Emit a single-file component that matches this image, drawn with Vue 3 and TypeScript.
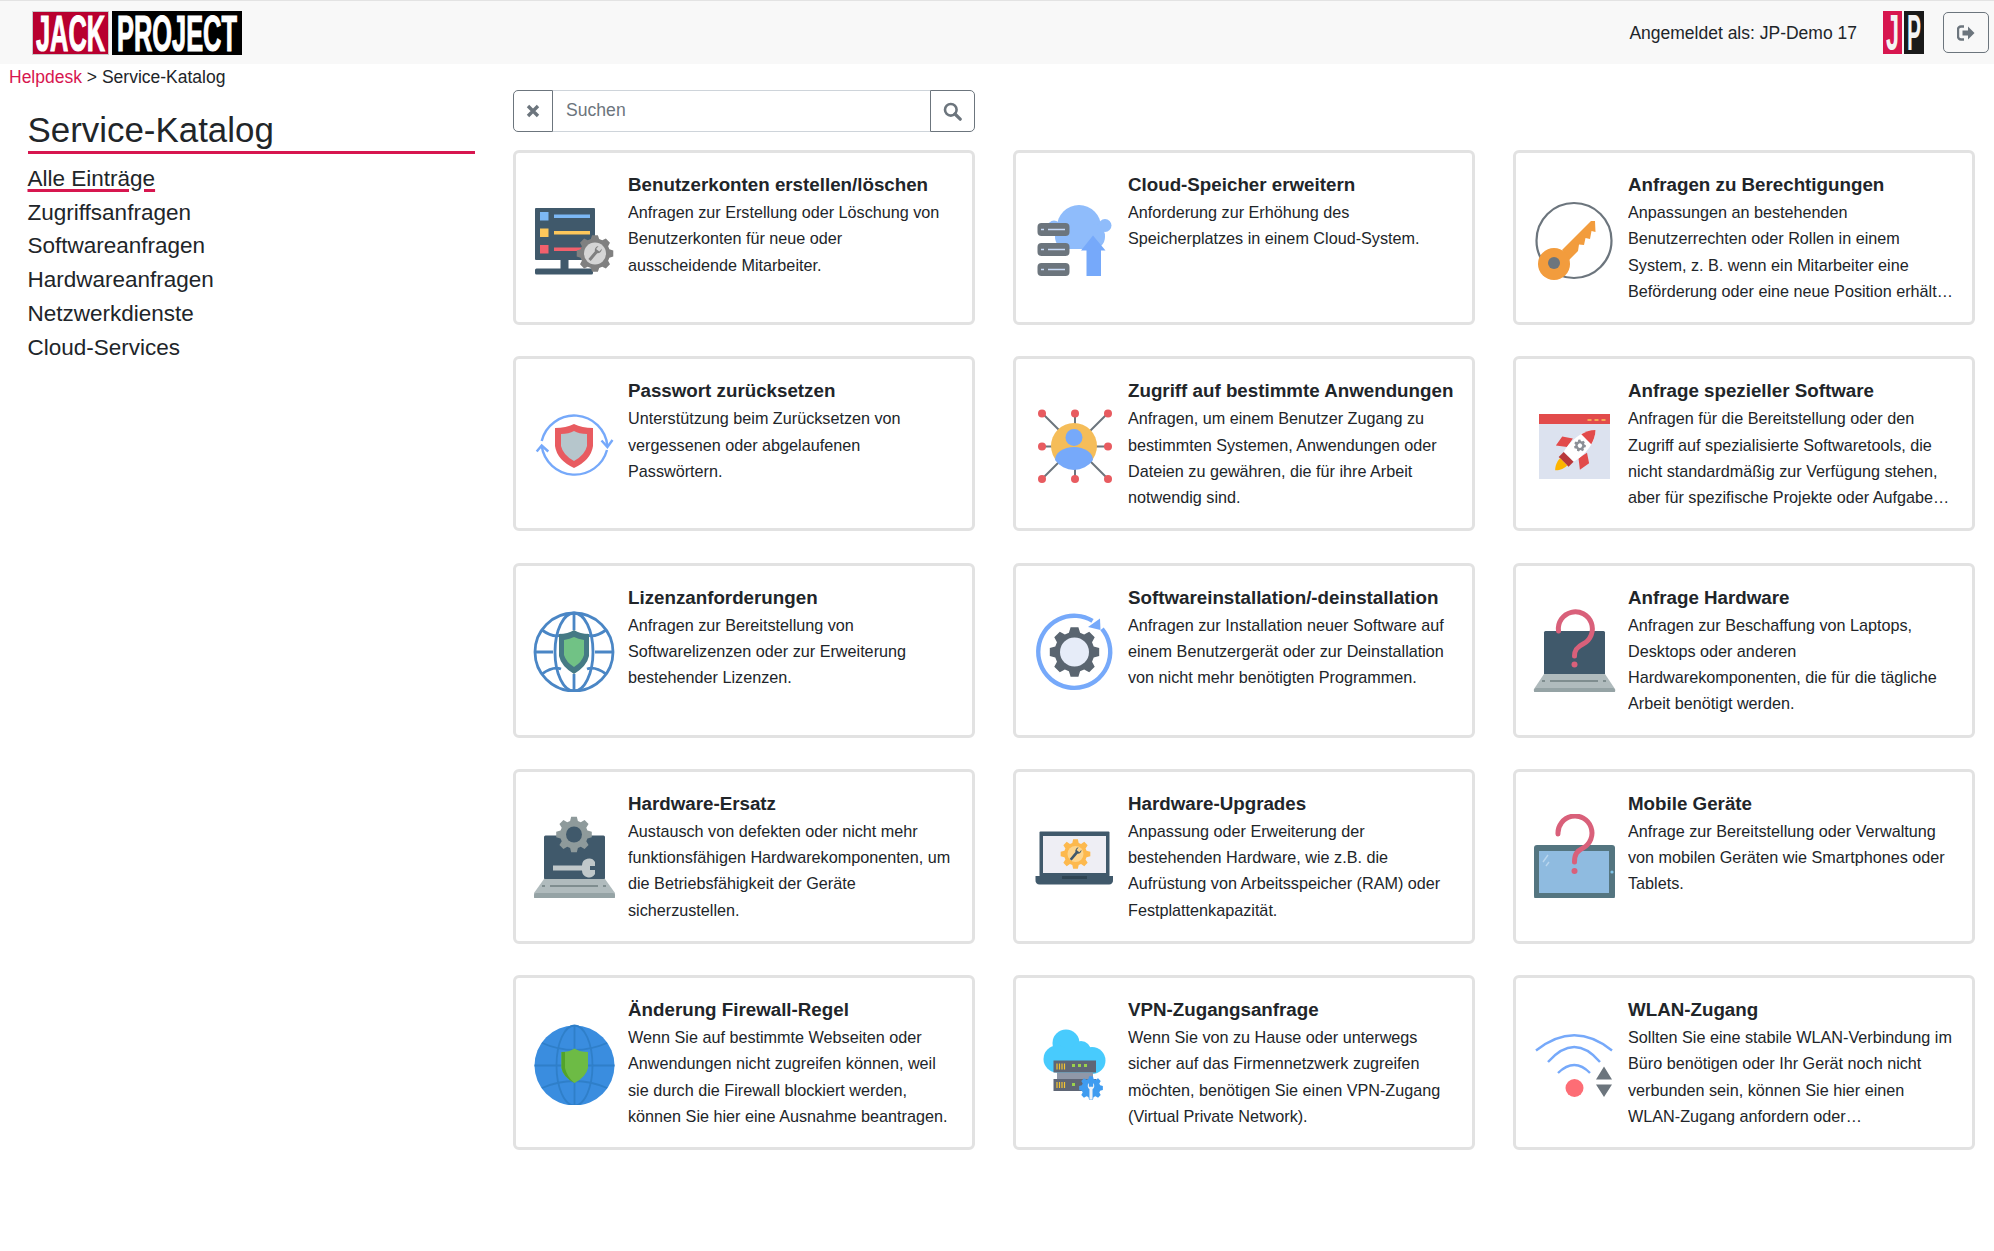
<script setup lang="ts">
interface Entry { icon: string; title: string; desc: string }

const menu: string[] = ['Alle Einträge', 'Zugriffsanfragen', 'Softwareanfragen', 'Hardwareanfragen', 'Netzwerkdienste', 'Cloud-Services']

const entries: Entry[] = [
  { icon: 'accounts', title: 'Benutzerkonten erstellen/löschen', desc: 'Anfragen zur Erstellung oder Löschung von Benutzerkonten für neue oder ausscheidende Mitarbeiter.' },
  { icon: 'cloud', title: 'Cloud-Speicher erweitern', desc: 'Anforderung zur Erhöhung des Speicherplatzes in einem Cloud-System.' },
  { icon: 'key', title: 'Anfragen zu Berechtigungen', desc: 'Anpassungen an bestehenden Benutzerrechten oder Rollen in einem System, z. B. wenn ein Mitarbeiter eine Beförderung oder eine neue Position erhält und zusätzliche Rechte benötigt.' },
  { icon: 'password', title: 'Passwort zurücksetzen', desc: 'Unterstützung beim Zurücksetzen von vergessenen oder abgelaufenen Passwörtern.' },
  { icon: 'network', title: 'Zugriff auf bestimmte Anwendungen', desc: 'Anfragen, um einem Benutzer Zugang zu bestimmten Systemen, Anwendungen oder Dateien zu gewähren, die für ihre Arbeit notwendig sind.' },
  { icon: 'rocket', title: 'Anfrage spezieller Software', desc: 'Anfragen für die Bereitstellung oder den Zugriff auf spezialisierte Softwaretools, die nicht standardmäßig zur Verfügung stehen, aber für spezifische Projekte oder Aufgaben benötigt werden.' },
  { icon: 'license', title: 'Lizenzanforderungen', desc: 'Anfragen zur Bereitstellung von Softwarelizenzen oder zur Erweiterung bestehender Lizenzen.' },
  { icon: 'install', title: 'Softwareinstallation/-deinstallation', desc: 'Anfragen zur Installation neuer Software auf einem Benutzergerät oder zur Deinstallation von nicht mehr benötigten Programmen.' },
  { icon: 'hardware', title: 'Anfrage Hardware', desc: 'Anfragen zur Beschaffung von Laptops, Desktops oder anderen Hardwarekomponenten, die für die tägliche Arbeit benötigt werden.' },
  { icon: 'replace', title: 'Hardware-Ersatz', desc: 'Austausch von defekten oder nicht mehr funktionsfähigen Hardwarekomponenten, um die Betriebsfähigkeit der Geräte sicherzustellen.' },
  { icon: 'upgrade', title: 'Hardware-Upgrades', desc: 'Anpassung oder Erweiterung der bestehenden Hardware, wie z.B. die Aufrüstung von Arbeitsspeicher (RAM) oder Festplattenkapazität.' },
  { icon: 'mobile', title: 'Mobile Geräte', desc: 'Anfrage zur Bereitstellung oder Verwaltung von mobilen Geräten wie Smartphones oder Tablets.' },
  { icon: 'firewall', title: 'Änderung Firewall-Regel', desc: 'Wenn Sie auf bestimmte Webseiten oder Anwendungen nicht zugreifen können, weil sie durch die Firewall blockiert werden, können Sie hier eine Ausnahme beantragen.' },
  { icon: 'vpn', title: 'VPN-Zugangsanfrage', desc: 'Wenn Sie von zu Hause oder unterwegs sicher auf das Firmennetzwerk zugreifen möchten, benötigen Sie einen VPN-Zugang (Virtual Private Network).' },
  { icon: 'wifi', title: 'WLAN-Zugang', desc: 'Sollten Sie eine stabile WLAN-Verbindung im Büro benötigen oder Ihr Gerät noch nicht verbunden sein, können Sie hier einen WLAN-Zugang anfordern oder Zugangsinformationen erneuern lassen.' },
]

function gear(cx: number, cy: number, ro: number, ri: number, n: number): string {
  const step = (Math.PI * 2) / n
  const pts: string[] = []
  for (let i = 0; i < n; i++) {
    const a = i * step - Math.PI / 2
    const add = (r: number, o: number) => pts.push(`${(cx + r * Math.cos(a + o * step)).toFixed(2)},${(cy + r * Math.sin(a + o * step)).toFixed(2)}`)
    add(ri, -0.36)
    add(ro, -0.2)
    add(ro, 0.2)
    add(ri, 0.36)
  }
  return pts.join(' ')
}

const wrench = 'M-1.8 10 V-2 A5 5 0 0 1 -2.5 -9.5 V-5 H2.5 V-9.5 A5 5 0 0 1 1.8 -2 V10 Z'
</script>

<template>
  <div class="page">
    <header class="top">
      <svg class="logo" width="210" height="44" viewBox="0 0 210 44">
        <rect x="0.5" y="0.5" width="76" height="43" fill="#b8002f" stroke="#c9c9c9" />
        <rect x="80" y="0" width="130" height="44" fill="#000" />
        <text class="logotext" transform="translate(4 40) scale(.507 1)">JACK</text>
        <text class="logotext" transform="translate(85 40) scale(.508 1)">PROJECT</text>
      </svg>
      <div class="user">
        <span class="who">Angemeldet als: JP-Demo 17</span>
        <svg class="jp" width="41" height="43" viewBox="0 0 41 43">
          <rect x="0" y="0" width="19" height="43" fill="#d7164f" />
          <rect x="21" y="0" width="20" height="43" fill="#1a1a1a" />
          <text class="jptext" transform="translate(3 39) scale(.47 1)">J</text>
          <text class="jptext" transform="translate(24 39) scale(.42 1)">P</text>
        </svg>
        <button class="logout" type="button" aria-label="Abmelden">
          <svg width="18" height="16" viewBox="0 0 18 16">
            <path d="M7 1.5H4A3 3 0 0 0 1 4.5V11.5A3 3 0 0 0 4 14.5H7" fill="none" stroke="#6c757d" stroke-width="2.4" />
            <path d="M11 1.5 L17.5 8 L11 14.5 V10.6 H5.5 V5.4 H11 Z" fill="#6c757d" />
          </svg>
        </button>
      </div>
    </header>

    <nav class="crumb"><a class="crumblink">Helpdesk</a> &gt; Service-Katalog</nav>

    <main class="main">
      <aside class="side">
        <h1 class="heading">Service-Katalog</h1>
        <ul class="menu">
          <li v-for="(m, i) in menu" :key="m" :class="{ active: i === 0 }"><span>{{ m }}</span></li>
        </ul>
      </aside>

      <section class="content">
        <div class="search">
          <button class="sbtn left" type="button" aria-label="Leeren">
            <svg width="14" height="14" viewBox="0 0 14 14"><path d="M2 2L12 12M12 2L2 12" stroke="#6c757d" stroke-width="3.4" /></svg>
          </button>
          <input class="sinput" type="text" placeholder="Suchen" />
          <button class="sbtn right" type="button" aria-label="Suchen">
            <svg width="19" height="19" viewBox="0 0 19 19">
              <circle cx="7.8" cy="7.8" r="5.8" fill="none" stroke="#6c757d" stroke-width="2.6" />
              <path d="M12 12L17.2 17.2" stroke="#6c757d" stroke-width="3.2" stroke-linecap="round" />
            </svg>
          </button>
        </div>

        <div class="grid">
          <article v-for="e in entries" :key="e.title" class="card">
            <svg class="icon" width="84" height="84" viewBox="0 -2 84 84">
              <template v-if="e.icon === 'accounts'">
                <rect x="2" y="10" width="60" height="52" rx="1" fill="#40596b" />
                <rect x="27.5" y="62" width="8" height="9" fill="#40596b" />
                <rect x="2" y="70.5" width="58" height="6" rx="1.5" fill="#40596b" />
                <rect x="7" y="14" width="8.5" height="8.5" fill="#7cb8f5" />
                <rect x="21" y="16.5" width="36" height="3.5" fill="#7cb8f5" />
                <rect x="7" y="30.5" width="8.5" height="8.5" fill="#fdc75b" />
                <rect x="21" y="33" width="36" height="3.5" fill="#fdc75b" />
                <rect x="7" y="47" width="8.5" height="8.5" fill="#f2606c" />
                <rect x="21" y="49.5" width="28" height="3.5" fill="#f2606c" />
                <polygon :points="gear(62, 55.5, 18.5, 15, 8)" fill="#808080" />
                <circle cx="62" cy="55.5" r="11" fill="#d5d5d5" />
                <path :d="wrench" transform="translate(62 55.5) rotate(40) scale(.85)" fill="#808080" />
              </template>

              <template v-else-if="e.icon === 'cloud'">
                <circle cx="46" cy="29" r="22" fill="#8fbcfb" />
                <circle cx="72" cy="27.5" r="6.5" fill="#8fbcfb" />
                <circle cx="21" cy="29" r="6.5" fill="#8fbcfb" />
                <rect x="22" y="26" width="50" height="25" rx="12" fill="#8fbcfb" />
                <rect x="4.5" y="25" width="32" height="13" rx="4" fill="#6c757d" />
                <rect x="4.5" y="45" width="32" height="13" rx="4" fill="#6c757d" />
                <rect x="4.5" y="65" width="32" height="13" rx="4" fill="#6c757d" />
                <path d="M8 31.5h3M15 31.5h17M8 51.5h3M15 51.5h17M8 71.5h3M15 71.5h17" stroke="#c9dcf8" stroke-width="1.6" />
                <path d="M60 37.5 L72.5 52.5 H68 V78 H53.5 V52.5 H48 Z" fill="#76a9fa" />
              </template>

              <template v-else-if="e.icon === 'key'">
                <circle cx="41" cy="42.5" r="37.5" fill="none" stroke="#6c757d" stroke-width="2.2" />
                <path d="M29 52 L58 23 H62 L62.5 34 L58.5 33 L57 41 L52.5 40 L51 47 L46 46.5 L45 53 L36 62 Z" fill="#f29c3d" />
                <circle cx="21" cy="66" r="16" fill="#f29c3d" />
                <circle cx="21" cy="65" r="6" fill="#6c757d" />
              </template>

              <template v-else-if="e.icon === 'password'">
                <path d="M8.7 37 A33.4 33.4 0 0 1 74.4 42 M74 46 A33.4 33.4 0 0 1 8.7 42" fill="none" stroke="#76a9fa" stroke-width="2.4" />
                <path d="M68.5 36.5 L74.4 43 L79.5 36 M3.7 47.5 L8.7 41.5 L15.3 47.5" fill="none" stroke="#76a9fa" stroke-width="2.4" />
                <path d="M22 24 Q33 24 41 20 Q49 24 60 24 V42 Q58 56 41 64 Q24 56 22 42 Z" fill="#e85b60" />
                <path d="M28 30 Q36 30 41 27 Q46 30 54 30 V42 Q52 51 41 57 Q30 51 28 42 Z" fill="#b6c6cc" />
              </template>

              <template v-else-if="e.icon === 'network'">
                <path d="M9 9L75 75M75 9L9 75M42 9V75M9 42.5H75" stroke="#6c757d" stroke-width="2" />
                <g fill="#e85b60">
                  <circle cx="9" cy="9.5" r="4" /><circle cx="42" cy="9.5" r="4" /><circle cx="75" cy="9.5" r="4" />
                  <circle cx="9" cy="42.5" r="4" /><circle cx="75" cy="42.5" r="4" />
                  <circle cx="9" cy="75" r="4" /><circle cx="42" cy="75" r="4" /><circle cx="75" cy="75" r="4" />
                </g>
                <circle cx="41" cy="42" r="23" fill="#f5bd59" />
                <circle cx="41" cy="33.5" r="8.5" fill="#76a9fa" />
                <path d="M22 56 A19 13 0 0 1 60 56 A23 23 0 0 1 22 56 Z" fill="#76a9fa" />
              </template>

              <template v-else-if="e.icon === 'rocket'">
                <rect x="6" y="10" width="71" height="65" fill="#dce2ef" />
                <rect x="6" y="10" width="71" height="10" fill="#e24b4b" />
                <path d="M54.5 16h4M61.5 16h4M68.5 16h4" stroke="#fdc75b" stroke-width="1.6" />
                <g transform="translate(45.5 43) rotate(45)">
                  <path d="M-10 -2 L-19 4 L-17 15 L-8 8 Z M10 -2 L19 4 L17 15 L8 8 Z" fill="#e24b4b" />
                  <path d="M0 -24 C10 -14 10 4 7 14 H-7 C-10 4 -10 -14 0 -24 Z" fill="#fff" />
                  <path d="M0 -24 C4 -20 6 -15 7 -11 H-7 C-6 -15 -4 -20 0 -24 Z" fill="#e24b4b" />
                  <rect x="-7" y="14" width="14" height="7" fill="#b8383a" />
                  <path d="M-5 21 H5 C5 27 2 31 0 33 C-2 31 -5 27 -5 21 Z" fill="#fdb400" />
                  <polygon :points="gear(0, -2, 6, 4.6, 7)" fill="#8b8f96" />
                  <circle cx="0" cy="-2" r="2.2" fill="#fff" />
                </g>
              </template>

              <template v-else-if="e.icon === 'license'">
                <g fill="none" stroke="#4a86c5" stroke-width="2.8">
                  <circle cx="41" cy="42" r="39" />
                  <ellipse cx="41" cy="42" rx="19" ry="39" />
                  <path d="M41 3V20M41 64V81M2 42H20M62 42H80M9 20Q20 28 28 25M73 20Q62 28 54 25M9 64Q20 56 28 59M73 64Q62 56 54 59" />
                </g>
                <path d="M26 24 Q35 24 41 20 Q47 24 56 24 V46 Q54 56 41 64 Q28 56 26 46 Z" fill="#457a85" />
                <path d="M31 30 Q37 29 41 27 Q45 29 51 30 V45 Q49 52 41 57 Q33 52 31 45 Z" fill="#71c285" />
              </template>

              <template v-else-if="e.icon === 'install'">
                <path d="M59.5 10.8 A36 36 0 1 0 69 18.9" fill="none" stroke="#76a9fa" stroke-width="4.4" />
                <path d="M55 17 L67 8.5 L67.5 20 Z" fill="#76a9fa" />
                <polygon :points="gear(41.5, 42, 25, 20, 8)" fill="#5a6570" />
                <circle cx="41.5" cy="42" r="14.5" fill="#e6ecf8" />
              </template>

              <template v-else-if="e.icon === 'hardware'">
                <rect x="11" y="21" width="61" height="44" rx="1.5" fill="#40596b" />
                <path d="M11 64 H72 L82 79 A3 3 0 0 1 80 83 H3 A3 3 0 0 1 1 79 Z" fill="#b0bbbd" />
                <rect x="1" y="78" width="81" height="5" rx="2.5" fill="#95a3a5" />
                <path d="M9 71h3M17 71h48M70 71h3" stroke="#7f8d8f" stroke-width="2" />
                <path d="M25.5 21 A17 17 0 1 1 50 34 C44 37 41.5 40 41.5 46" fill="none" stroke="#d9607a" stroke-width="5" stroke-linecap="round" />
                <circle cx="41.5" cy="54.5" r="3" fill="#d9607a" />
              </template>

              <template v-else-if="e.icon === 'replace'">
                <rect x="11" y="19.5" width="61" height="44" rx="1.5" fill="#40596b" />
                <path d="M11 63 H72 L82 77 V80 A3 3 0 0 1 79 83 H4 A3 3 0 0 1 1 80 V77 Z" fill="#b0bbbd" />
                <rect x="1" y="77" width="81" height="6" rx="2.5" fill="#95a3a5" />
                <path d="M9 70h3M17 70h48M70 70h3" stroke="#7f8d8f" stroke-width="2" />
                <polygon :points="gear(41, 18.5, 18, 14, 8)" fill="#8e9a9b" />
                <circle cx="41" cy="18.5" r="8" fill="#40596b" />
                <path d="M20 49.5 H49 A7 7 0 0 1 62 46 V50 H57 V54 H62 V58 A7 7 0 0 1 49 54.5 H20 Z" fill="#c0c8ca" />
              </template>

              <template v-else-if="e.icon === 'upgrade'">
                <rect x="6.5" y="15.5" width="70" height="45" rx="1" fill="#40596b" />
                <rect x="10" y="20" width="63" height="37" fill="#eeeef4" />
                <path d="M2.5 60 H80 V64 A4 4 0 0 1 76 68.5 H6.5 A4 4 0 0 1 2.5 64 Z" fill="#40596b" />
                <rect x="29" y="60" width="25" height="3" fill="#2f4553" />
                <polygon :points="gear(42.5, 38, 15, 11.5, 8)" fill="#fdb94d" />
                <circle cx="42.5" cy="38" r="8" fill="#fdd58c" />
                <path :d="wrench" transform="translate(42.5 38) rotate(40) scale(.75)" fill="#40596b" />
              </template>

              <template v-else-if="e.icon === 'mobile'">
                <rect x="1" y="29" width="81" height="54" rx="3" fill="#547580" />
                <rect x="6" y="35" width="70" height="42" fill="#8fbbe0" />
                <circle cx="79" cy="56" r="1.6" fill="#7fc4e8" />
                <path d="M10 46L15 39M13 50L16 46" stroke="#b9d6ee" stroke-width="1.4" />
                <path d="M25 18 A17 17 0 1 1 50 32 C44 35 41.5 38 41.5 46" fill="none" stroke="#d9607a" stroke-width="5" stroke-linecap="round" />
                <circle cx="41.5" cy="55" r="3" fill="#d9607a" />
              </template>

              <template v-else-if="e.icon === 'firewall'">
                <circle cx="41.5" cy="42.5" r="40" fill="#3a8ddf" />
                <g fill="none" stroke="#2f7fc9" stroke-width="1.8">
                  <ellipse cx="41.5" cy="42.5" rx="18" ry="40" />
                  <path d="M41.5 2.5V82.5M1.5 42.5H81.5M9 20Q41.5 34 74 20M9 65Q41.5 51 74 65" />
                </g>
                <path d="M28.5 29 Q36 29 41.5 25.5 Q47 29 55 29 V45 Q53 54 41.5 60 Q30 54 28.5 45 Z" fill="#6dbb45" />
                <path d="M28.5 29 Q30 29 32 29 V45 Q34 54 41.5 60 Q30 54 28.5 45 Z" fill="#52a32a" />
              </template>

              <template v-else-if="e.icon === 'vpn'">
                <circle cx="33" cy="20" r="13.5" fill="#48cbfd" />
                <circle cx="48" cy="28" r="10" fill="#48cbfd" />
                <circle cx="24" cy="36" r="13.5" fill="#48cbfd" />
                <circle cx="59" cy="37.5" r="13.5" fill="#48cbfd" />
                <rect x="24" y="25" width="35" height="25" fill="#48cbfd" />
                <rect x="20.5" y="37.5" width="42.5" height="12" fill="#5f6675" />
                <rect x="24" y="49.5" width="36" height="7" fill="#9098a8" />
                <rect x="20.5" y="56" width="42.5" height="12" fill="#5f6675" />
                <path d="M24 40.5V46.5M26.5 40.5V46.5M29 40.5V46.5M31.5 40.5V46.5M24 59V65M26.5 59V65M29 59V65M31.5 59V65" stroke="#f4c430" stroke-width="1.2" />
                <path d="M39 41h3v3h-3zM45 41h3v3h-3zM51 41h3v3h-3zM39 60h3v3h-3z" fill="#9ad24c" />
                <polygon :points="gear(58, 65, 12, 9.5, 8)" fill="#3f9cf0" />
                <path :d="wrench" transform="translate(58 68) scale(.85)" fill="#eef2f7" />
              </template>

              <template v-else>
                <g fill="none" stroke="#76a9fa" stroke-width="2.4">
                  <path d="M3 27.5 Q41.5 -3 79 27.5" />
                  <path d="M15 39 Q41.5 9 67 39" />
                  <path d="M25 50 Q41.5 34 57 50" />
                </g>
                <circle cx="41.5" cy="65" r="9" fill="#fd6d75" />
                <path d="M71 43.5 L79 56.5 H63 Z M63 61.5 H79 L71 74 Z" fill="#6c757d" />
              </template>
            </svg>
            <div class="text">
              <h2 class="title">{{ e.title }}</h2>
              <p class="desc">{{ e.desc }}</p>
            </div>
          </article>
        </div>
      </section>
    </main>
  </div>
</template>

<style>
html, body { margin: 0; background: #fff; }
</style>

<style scoped>
.page {
  font-family: "Liberation Sans", Arial, sans-serif;
  color: #212529;
  font-size: 17.5px;
  min-height: 1251px;
}
.top {
  box-sizing: border-box;
  height: 64px;
  background: #f8f8f8;
  border-top: 1px solid #e3e3e3;
  display: flex;
  align-items: center;
  justify-content: space-between;
  padding: 0 5px 0 32px;
}
.logo, .jp { display: block; overflow: visible; }
.logotext {
  font-family: "Liberation Sans", sans-serif;
  font-weight: 700;
  font-size: 50px;
  fill: #fff;
  stroke: #fff;
  stroke-width: 1.2px;
}
.jptext {
  font-family: "Liberation Sans", sans-serif;
  font-weight: 700;
  font-size: 50px;
  fill: #f4f4f4;
}
.user { display: flex; align-items: center; }
.who { font-size: 17.5px; margin: 2px 26px 0 0; }
.jp { margin-right: 19px; }
.logout {
  box-sizing: border-box;
  width: 46px;
  height: 41px;
  border: 1px solid #6c757d;
  border-radius: 5px;
  background: transparent;
  display: flex;
  align-items: center;
  justify-content: center;
  padding: 0;
}
.crumb {
  height: 26px;
  line-height: 26px;
  padding-left: 9px;
  font-size: 17.5px;
}
.crumblink { color: #d7164f; }
.main {
  display: grid;
  grid-template-columns: 513px 1fr;
}
.side { padding: 0 38px 0 27.5px; }
.heading {
  margin: 0;
  padding-top: 19px;
  font-weight: 400;
  font-size: 34.9px;
  line-height: 42px;
  border-bottom: 3px solid #d7164f;
}
.menu { list-style: none; margin: 7.8px 0 0; padding: 0; }
.menu li { font-size: 22.5px; line-height: 33.75px; }
.menu li.active span {
  text-decoration: underline;
  text-decoration-color: #d7164f;
  text-decoration-thickness: 3px;
  text-underline-offset: 3px;
}
.search {
  display: grid;
  grid-template-columns: 40px 1fr 45px;
  width: 462px;
  height: 42px;
  margin-bottom: 18px;
}
.sbtn {
  box-sizing: border-box;
  border: 1px solid #6c757d;
  background: #fff;
  padding: 0;
  display: flex;
  align-items: center;
  justify-content: center;
}
.sbtn.left { border-radius: 5px 0 0 5px; }
.sbtn.right { border-radius: 0 5px 5px 0; }
.sinput {
  box-sizing: border-box;
  min-width: 0;
  border: 1px solid #ced4da;
  border-width: 1px 0;
  padding: 0 13px 2px;
  font-family: inherit;
  font-size: 17.6px;
  outline: none;
}
.sinput::placeholder { color: #6c757d; opacity: 1; }
.grid {
  display: grid;
  grid-template-columns: repeat(3, 462px);
  column-gap: 38px;
  row-gap: 31.25px;
}
.card {
  box-sizing: border-box;
  height: 175px;
  border: 3px solid #e2e2e2;
  border-radius: 6px;
  display: grid;
  grid-template-columns: 84px 1fr;
  column-gap: 11px;
  padding: 0 17px;
  background: #fff;
}
.icon { align-self: center; display: block; }
.text { padding: 17px 2px 0 0; min-width: 0; }
.title {
  margin: 0;
  font-size: 18.75px;
  line-height: 29.5px;
  font-weight: 700;
  white-space: nowrap;
}
.desc {
  margin: -0.5px 0 0;
  font-size: 16.2px;
  line-height: 26.25px;
  display: -webkit-box;
  -webkit-line-clamp: 4;
  -webkit-box-orient: vertical;
  overflow: hidden;
}
</style>
